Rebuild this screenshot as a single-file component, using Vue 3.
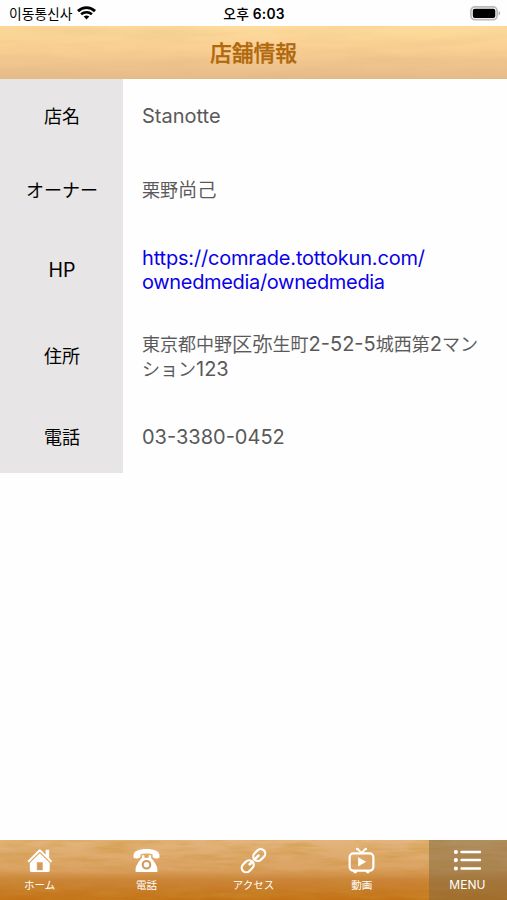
<script setup>
const rows = [
  { label: '店名', kind: 'single', lines: [[{ t: 'Stanotte', c: 'latin' }]] },
  { label: 'オーナー', kind: 'single', lines: [[{ t: '栗野', c: 'jp' }, { t: '尚己', c: 'wide name' }]] },
  {
    label: 'HP', kind: 'double', link: true,
    lines: [[{ t: 'https://comrade.tottokun.com/', c: 'latin host' }], [{ t: 'ownedmedia/ownedmedia', c: 'latin path' }]],
  },
  {
    label: '住所', kind: 'double',
    lines: [
      [
        { t: '東京都中野', c: 'jp' }, { t: '区弥', c: 'wide' }, { t: '生町', c: 'jp' },
        { t: '2-52-5', c: 'latin' }, { t: '城西第', c: 'jp' }, { t: '2', c: 'latin' }, { t: 'マン', c: 'jp' },
      ],
      [{ t: 'ション', c: 'jp' }, { t: '123', c: 'latin' }],
    ],
  },
  { label: '電話', kind: 'single', lines: [[{ t: '03-3380-0452', c: 'latin' }]] },
]
const tabs = [
  { id: 'home', label: 'ホーム' },
  { id: 'phone', label: '電話' },
  { id: 'access', label: 'アクセス' },
  { id: 'video', label: '動画' },
  { id: 'menu', label: 'MENU' },
]
</script>

<template>
  <div class="screen">
    <div class="status">
      <div class="carrier">
        <span>이동통신사</span>
        <svg class="wifi" viewBox="0 0 19 14" width="19" height="14">
          <path d="M1 5.1C5.9.5 13.1.5 18 5.1" fill="none" stroke="#000" stroke-width="2.9" />
          <path d="M4.1 8.3c3.1-2.8 7.7-2.8 10.8 0" fill="none" stroke="#000" stroke-width="2.6" />
          <path d="M6.7 10.6c1.7-1.4 3.9-1.4 5.6 0L9.5 13.4z" />
        </svg>
      </div>
      <div class="time"><span class="ampm">오후</span> 6:03</div>
      <div class="battery">
        <svg viewBox="0 0 31 15" width="31" height="15">
          <rect x=".9" y=".9" width="26.2" height="12.8" rx="4" fill="#fff" stroke="#b9b9b9" stroke-width="1.7" />
          <rect x="2.8" y="2.7" width="22.5" height="9.2" rx="2" />
          <path d="M28.6 5.2c2 .7 2 3.5 0 4.2z" fill="#aaa" />
        </svg>
      </div>
    </div>

    <header class="header">
      <svg class="wood" viewBox="0 0 507 53" preserveAspectRatio="none">
        <defs>
          <linearGradient id="top-wood" x1="0" y1="0" x2="0" y2="1">
            <stop offset="0" stop-color="#ffdc9b" />
            <stop offset=".5" stop-color="#f9cd93" />
            <stop offset="1" stop-color="#e4ba88" />
          </linearGradient>
          <filter id="top-grain" x="0" y="0" width="1" height="1">
            <feTurbulence type="fractalNoise" baseFrequency=".01 .07" numOctaves="3" seed="8" />
            <feColorMatrix values="0 0 0 0 .72  0 0 0 0 .46  0 0 0 0 .2  .6 0 0 0 -.23" />
          </filter>
        </defs>
        <rect width="507" height="53" fill="url(#top-wood)" />
        <rect width="507" height="53" filter="url(#top-grain)" />
      </svg>
      <h1>店舗情報</h1>
    </header>

    <main class="details">
      <div v-for="row in rows" :key="row.label" class="row" :class="row.kind">
        <div class="label" :class="{ roman: row.label === 'HP' }">{{ row.label }}</div>
        <div class="value" :class="{ link: row.link }">
          <div v-for="(line, i) in row.lines" :key="i" class="line"><span v-for="(part, j) in line" :key="j" :class="part.c">{{ part.t }}</span></div>
        </div>
      </div>
    </main>

    <nav class="tabbar">
      <svg class="wood" viewBox="0 0 507 60" preserveAspectRatio="none">
        <defs>
          <linearGradient id="bottom-wood" x1="0" y1="0" x2="0" y2="1">
            <stop offset="0" stop-color="#e3b57d" />
            <stop offset=".5" stop-color="#dba263" />
            <stop offset=".66" stop-color="#cb843a" />
            <stop offset="1" stop-color="#c47214" />
          </linearGradient>
          <filter id="bottom-grain" x="0" y="0" width="1" height="1">
            <feTurbulence type="fractalNoise" baseFrequency=".022 .17" numOctaves="4" seed="13" />
            <feColorMatrix values="0 0 0 0 .58  0 0 0 0 .28  0 0 0 0 .03  1.1 0 0 0 -.43" />
          </filter>
        </defs>
        <rect width="507" height="60" fill="url(#bottom-wood)" />
        <rect width="507" height="60" filter="url(#bottom-grain)" />
      </svg>
      <div v-for="tab in tabs" :key="tab.id" class="tab" :class="tab.id">
        <svg v-if="tab.id === 'home'" viewBox="0 0 28 28" class="icon">
          <path d="M2.2 15.2 14.3 3.4 26.4 15.2" fill="none" stroke="#fff" stroke-width="2.1" stroke-linejoin="round" />
          <path d="M20.4 2.8h3.6v9.5l-3.6-3.6z" fill="#fff" />
          <path d="M14.3 6.6 4 16.7v7.6q0 1.5 1.5 1.5h17.6q1.5 0 1.5-1.5v-7.6zM11.2 15.8h6.2v8.2h-6.2z" fill="#fff" fill-rule="evenodd" />
          <path d="M12.3 17h4v6h-4z" fill="#cf9a61" />
        </svg>
        <svg v-else-if="tab.id === 'phone'" viewBox="0 0 28 28" class="icon">
          <path d="M.8 11.5C-1 5.2 4.4 2.2 14 2.2s15 3 13.2 9.3c-2.3.8-5.2.5-6.9-.9V7.8c-3-1.4-9.6-1.4-12.6 0v2.8c-1.7 1.4-4.6 1.7-6.9.9z" fill="#fff" />
          <path d="M9.2 8.5h2.6v2.7h4.4V8.5h2.6v2.9c3.4 3.6 6.5 8.2 6.5 11.8v2.6H2.7v-2.6c0-3.6 3.1-8.2 6.5-11.8z" fill="#fff" />
          <circle cx="14" cy="18.4" r="3.9" fill="#fff" stroke="#d39a5c" stroke-width="2.2" />
        </svg>
        <svg v-else-if="tab.id === 'access'" viewBox="0 0 28 28" class="icon">
          <g fill="none" stroke="#fff" stroke-width="2.3" stroke-linecap="round">
            <rect x="-6.8" y="-4.7" width="13.6" height="9.4" rx="4.7" transform="translate(20 8.3) rotate(-45)" />
            <rect x="-6.8" y="-4.7" width="13.6" height="9.4" rx="4.7" transform="translate(8 20) rotate(-45)" />
            <path d="m10.1 17.9 2.6-2.6m3-3 3.4-3.4" stroke-width="2.8" />
          </g>
        </svg>
        <svg v-else-if="tab.id === 'video'" viewBox="0 0 28 28" class="icon">
          <path d="m14 6-4-4.1M14 6l4-4.1" stroke="#fff" stroke-width="1.9" fill="none" />
          <circle cx="9.6" cy="2.2" r="1.4" fill="#fff" /><circle cx="18.4" cy="2.2" r="1.4" fill="#fff" />
          <rect x="1.7" y="6.6" width="24.6" height="18" rx="4" stroke="#fff" stroke-width="2.3" fill="none" />
          <path d="M10.5 10.6v9.6l8.3-4.8zM5.2 25h4.6l-1.1 2.3H6.2zM18.2 25h4.6l-1 2.3h-2.5z" fill="#fff" />
        </svg>
        <svg v-else viewBox="0 0 28 28" class="icon">
          <g fill="#fff">
            <circle cx="2" cy="5.1" r="2.1" /><circle cx="2" cy="13.6" r="2.1" /><circle cx="2" cy="22.2" r="2.1" />
            <rect x="6.7" y="3.8" width="21.3" height="2.6" rx=".8" /><rect x="6.7" y="12.3" width="21.3" height="2.6" rx=".8" /><rect x="6.7" y="20.9" width="21.3" height="2.6" rx=".8" />
          </g>
        </svg>
        <span>{{ tab.label }}</span>
      </div>
    </nav>
  </div>
</template>

<style>
body { margin: 0; background: #fff; }
</style>

<style scoped>
.screen {
  width: 507px;
  height: 900px;
  display: flex;
  flex-direction: column;
  overflow: hidden;
  background: #fefefe;
  font-family: Inter, "Noto Sans CJK JP", sans-serif;
}
.status {
  height: 26px;
  display: grid;
  grid-template-columns: 1fr 1fr 1fr;
  align-items: center;
  padding: 0 6px 0 9px;
  font-size: 13.8px;
  white-space: nowrap;
}
.carrier { display: flex; align-items: center; gap: 5px; font-family: "Noto Sans CJK KR", sans-serif; font-size: 13.8px; }
.time { text-align: center; font-weight: 600; letter-spacing: 0.2px; padding-right: 2px; }
.ampm { font-family: "Noto Sans CJK KR", sans-serif; font-weight: 500; }
.battery { display: flex; justify-content: flex-end; }
.header { height: 53px; display: grid; place-items: center; }
.header > *, .header h1 { grid-area: 1 / 1; }
.wood { display: block; width: 100%; height: 100%; min-height: 0; }
h1 { margin: 0; padding-bottom: 1px; z-index: 1; font: 500 21.8px/30px "Noto Sans CJK JP", sans-serif; color: #b0680d; -webkit-text-stroke: 0.3px #b0680d; }
.details { flex: 1; }
.row { display: grid; grid-template-columns: 123px 1fr; }
.single { height: 73.7px; }
.double { height: 86.4px; }
.label {
  display: flex;
  align-items: center;
  justify-content: center;
  padding: 0 0 1px 1px;
  background: #e7e5e6;
  color: #000;
  font: 400 18px/26px "Noto Sans CJK JP", sans-serif;
}
.roman { padding-bottom: 0; font: 400 19.5px/26px Inter, sans-serif; }
.value { display: flex; flex-direction: column; justify-content: center; padding: 1px 0 0 19px; color: #595959; }
.line { display: flex; align-items: center; height: 24.7px; white-space: nowrap; line-height: 24px; }
.latin { font-size: 20px; }
.host { letter-spacing: -0.18px; }
.path { letter-spacing: -0.33px; }
.jp { padding-bottom: 2px; font: 350 18px/24px "Noto Sans CJK JP", sans-serif; }
.wide { padding-bottom: 2px; font: 350 20.3px/24px "Noto Sans CJK KR", sans-serif; }
.name { font-size: 19.3px; }
.jp, .wide { -webkit-text-stroke: 0.1px #595959; }
.link { color: #0b00e9; }
.tabbar { height: 60px; display: grid; grid-template: 60px / repeat(4, 107.2px) 1fr; }
.tabbar > .wood { grid-area: 1 / 1 / 2 / 6; }
.tab {
  grid-row: 1;
  z-index: 1;
  display: flex;
  flex-direction: column;
  align-items: center;
  padding-top: 7px;
  color: #fff;
  font: 400 10.5px/15px "Noto Sans CJK JP", sans-serif;
}
.home { grid-column: 1; padding-right: 28px; }
.phone { grid-column: 2; padding-right: 28.4px; }
.access { grid-column: 3; padding-right: 29px; }
.video { grid-column: 4; padding-right: 27px; }
.menu { grid-column: 5; padding-right: 1px; background: rgba(125, 103, 65, 0.5); font: 400 12px/15px Inter, sans-serif; }
.icon { width: 27px; height: 27px; flex: none; margin-bottom: 3px; }

/* Each tab occupies its share of the bar: content centres at 39, 146, 253, 361 and 467. */
.home, .phone, .access, .video { box-sizing: border-box; }
</style>
